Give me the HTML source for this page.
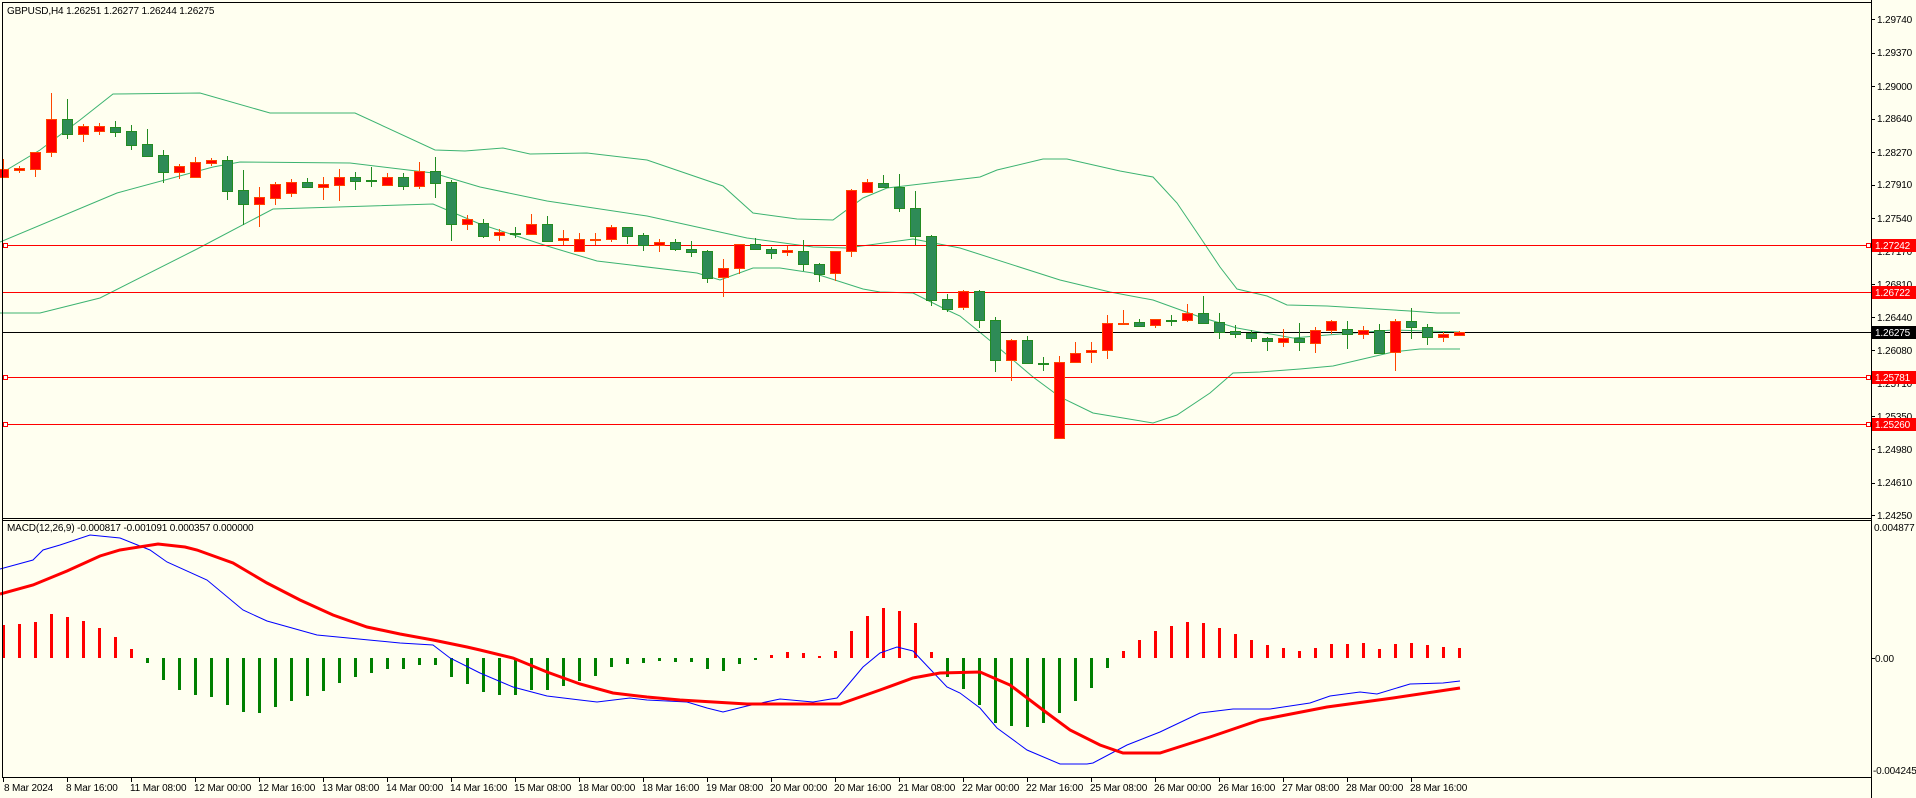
<!DOCTYPE html>
<html><head><meta charset="utf-8"><style>
html,body{margin:0;padding:0;background:#fffff0;}
svg{display:block;}
text{font-family:"Liberation Sans","DejaVu Sans",sans-serif;font-size:10px;letter-spacing:-0.15px;fill:#000;}
</style></head><body>
<svg id="s" width="1916" height="798" viewBox="0 0 1916 798" xmlns="http://www.w3.org/2000/svg" shape-rendering="crispEdges">
<rect x="0" y="0" width="1916" height="798" fill="#fffff0"/>
<g id="bands" fill="none" stroke="#3cb371" stroke-width="1" shape-rendering="auto">
<polyline points="0,174 40,150 80,120 113,94 200,93 270,113 355,113 435,150 465,151 503,148 530,154 587,153 647,160 723,186 753,213 797,219 833,220 863,198 887,188 980,177 997,170 1043,159 1067,159 1120,171 1153,177 1177,203 1200,237 1220,267 1237,289 1267,296 1287,305 1327,306 1410,311 1437,313 1460,313"/>
<polyline points="0,242 117,193 213,167 240,162 350,163 433,173 480,187 547,201 647,216 747,238 813,247 847,248 913,239 960,248 1060,280 1110,292 1153,300 1200,317 1237,328 1293,338 1327,335 1393,330 1460,332"/>
<polyline points="0,313 40,313 100,298 197,249 273,209 433,204 480,224 547,246 597,261 697,273 720,280 753,268 780,268 813,273 863,289 880,292 913,293 947,310 960,316 993,343 1033,377 1060,397 1093,413 1153,423 1177,415 1210,393 1233,373 1260,372 1300,369 1333,366 1393,352 1420,349 1460,349"/>
</g>
<g id="hl">
<line x1="2" y1="245.5" x2="1871" y2="245.5" stroke="#ff0000"/>
<line x1="2" y1="292.5" x2="1871" y2="292.5" stroke="#ff0000"/>
<line x1="2" y1="377.5" x2="1871" y2="377.5" stroke="#ff0000"/>
<line x1="2" y1="424.5" x2="1871" y2="424.5" stroke="#ff0000"/>
<line x1="2" y1="332.5" x2="1871" y2="332.5" stroke="#000"/>
<rect x="3.5" y="243.5" width="4" height="4" fill="#fff" stroke="#ff0000"/>
<rect x="3.5" y="375.5" width="4" height="4" fill="#fff" stroke="#ff0000"/>
<rect x="3.5" y="422.5" width="4" height="4" fill="#fff" stroke="#ff0000"/>
<rect x="1866.5" y="243.5" width="4" height="4" fill="#fff" stroke="#ff0000"/>
<rect x="1866.5" y="375.5" width="4" height="4" fill="#fff" stroke="#ff0000"/>
<rect x="1866.5" y="422.5" width="4" height="4" fill="#fff" stroke="#ff0000"/>
</g>
<g id="candles"></g>
<g id="hist"></g>
<g fill="none" shape-rendering="auto">
<polyline stroke="#0000ff" stroke-width="1" points="0,569 33,560 43,550 60,545 90,535 120,538 140,546 150,550 167,562 207,580 243,610 267,621 317,635 400,643 433,645 450,658 480,673 513,687 547,696 580,700 597,702 630,698 647,700 687,702 707,708 723,712 747,706 780,699 813,702 837,698 863,667 880,653 897,647 913,651 947,687 960,693 980,708 997,728 1027,750 1060,764 1087,764 1093,763 1127,745 1160,732 1200,713 1233,709 1270,709 1310,703 1330,696 1360,692 1377,694 1410,684 1443,683 1460,681"/>
<polyline stroke="#ff0000" stroke-width="3" points="0,594 33,585 67,571 100,556 120,550 158,544 185,547 197,550 233,563 267,583 300,600 333,615 367,627 400,634 433,640 467,647 480,650 513,658 547,672 580,684 613,693 647,697 680,700 747,704 840,704 880,690 913,678 940,673 980,672 1010,685 1043,710 1070,730 1100,745 1123,753 1160,753 1210,737 1260,720 1327,707 1393,698 1460,688"/>
</g>
<line x1="2.5" y1="2" x2="2.5" y2="778" stroke="#000"/>
<line x1="2" y1="2.5" x2="1871" y2="2.5" stroke="#000"/>
<line x1="1871.5" y1="0" x2="1871.5" y2="798" stroke="#000"/>
<line x1="2" y1="518.5" x2="1871" y2="518.5" stroke="#000"/>
<line x1="2" y1="520.5" x2="1871" y2="520.5" stroke="#000"/>
<line x1="2" y1="777.5" x2="1871" y2="777.5" stroke="#000"/>
<g id="pt" stroke="#000"></g>
<g id="tt" stroke="#000"></g>
<text x="7" y="14">GBPUSD,H4  1.26251 1.26277 1.26244 1.26275</text>
<text x="7" y="531">MACD(12,26,9) -0.000817 -0.001091 0.000357 0.000000</text>
<g id="plab">
<text x="1877" y="23">1.29740</text>
<text x="1877" y="56">1.29370</text>
<text x="1877" y="90">1.29000</text>
<text x="1877" y="122">1.28640</text>
<text x="1877" y="156">1.28270</text>
<text x="1877" y="188">1.27910</text>
<text x="1877" y="222">1.27540</text>
<text x="1877" y="255">1.27170</text>
<text x="1877" y="288">1.26810</text>
<text x="1877" y="321">1.26440</text>
<text x="1877" y="354">1.26080</text>
<text x="1877" y="387">1.25710</text>
<text x="1877" y="420">1.25350</text>
<text x="1877" y="453">1.24980</text>
<text x="1877" y="486">1.24610</text>
<text x="1877" y="519">1.24250</text>
</g>
<rect x="1872" y="239" width="44" height="13" fill="#ff0000"/><text x="1875" y="249" style="fill:#fff">1.27242</text>
<rect x="1872" y="286" width="44" height="13" fill="#ff0000"/><text x="1875" y="296" style="fill:#fff">1.26722</text>
<rect x="1872" y="326" width="44" height="13" fill="#000"/><text x="1875" y="336" style="fill:#fff">1.26275</text>
<rect x="1872" y="371" width="44" height="13" fill="#ff0000"/><text x="1875" y="381" style="fill:#fff">1.25781</text>
<rect x="1872" y="418" width="44" height="13" fill="#ff0000"/><text x="1875" y="428" style="fill:#fff">1.25260</text>
<text x="1874" y="531">0.004877</text>
<text x="1875" y="662">0.00</text>
<text x="1873" y="774">-0.004245</text>
<g id="tlab">
<text x="4" y="791">8 Mar 2024</text>
<text x="66" y="791">8 Mar 16:00</text>
<text x="130" y="791">11 Mar 08:00</text>
<text x="194" y="791">12 Mar 00:00</text>
<text x="258" y="791">12 Mar 16:00</text>
<text x="322" y="791">13 Mar 08:00</text>
<text x="386" y="791">14 Mar 00:00</text>
<text x="450" y="791">14 Mar 16:00</text>
<text x="514" y="791">15 Mar 08:00</text>
<text x="578" y="791">18 Mar 00:00</text>
<text x="642" y="791">18 Mar 16:00</text>
<text x="706" y="791">19 Mar 08:00</text>
<text x="770" y="791">20 Mar 00:00</text>
<text x="834" y="791">20 Mar 16:00</text>
<text x="898" y="791">21 Mar 08:00</text>
<text x="962" y="791">22 Mar 00:00</text>
<text x="1026" y="791">22 Mar 16:00</text>
<text x="1090" y="791">25 Mar 08:00</text>
<text x="1154" y="791">26 Mar 00:00</text>
<text x="1218" y="791">26 Mar 16:00</text>
<text x="1282" y="791">27 Mar 08:00</text>
<text x="1346" y="791">28 Mar 00:00</text>
<text x="1410" y="791">28 Mar 16:00</text>
</g>
</svg>
<script>
(function(){
var NS="http://www.w3.org/2000/svg";
function el(p,n,a){var e=document.createElementNS(NS,n);for(var k in a)e.setAttribute(k,a[k]);p.appendChild(e);return e;}
var C=[[169,177,159,177,'r'],[168,170,166,173,'r'],[152,169,152,177,'r'],[119,152,93,157,'r'],[119,134,99,139,'g'],[126,134,124,142,'r'],[126,131,123,135,'r'],[127,132,121,137,'g'],[131,145,125,150,'g'],[144,156,129,156,'g'],
[155,172,150,183,'g'],[166,172,164,179,'r'],[162,177,157,177,'r'],[160,163,158,166,'r'],[160,191,156,200,'g'],[190,204,170,225,'g'],[197,204,187,227,'r'],[184,198,182,205,'r'],[182,193,179,197,'r'],[182,187,178,187,'g'],
[184,187,177,200,'r'],[177,185,169,201,'r'],[177,181,172,190,'g'],[180,180,167,187,'g'],[177,185,173,185,'r'],[177,186,173,190,'g'],[171,186,162,189,'r'],[171,183,157,198,'g'],[182,224,180,241,'g'],[219,224,215,230,'r'],
[223,236,219,238,'g'],[232,235,229,241,'r'],[233,233,227,238,'g'],[224,234,214,235,'r'],[224,241,216,242,'g'],[238,240,230,245,'r'],[239,251,233,251,'r'],[239,239,233,245,'r'],[227,239,225,242,'r'],[227,236,227,244,'g'],
[235,245,233,251,'g'],[242,245,239,252,'r'],[242,249,239,251,'g'],[249,252,241,257,'g'],[251,278,250,283,'g'],[268,277,259,297,'r'],[244,268,244,274,'r'],[244,249,238,249,'g'],[249,253,247,259,'g'],[250,252,246,256,'r'],
[251,264,240,271,'g'],[264,274,263,282,'g'],[251,273,251,281,'r'],[190,251,189,257,'r'],[182,192,179,192,'r'],[183,187,175,187,'g'],[187,208,174,212,'g'],[208,236,191,245,'g'],[236,300,235,306,'g'],[299,309,294,312,'g'],
[291,307,290,310,'r'],[291,320,290,328,'g'],[320,360,317,372,'g'],[340,360,339,381,'r'],[340,363,336,363,'g'],[363,363,357,371,'g'],[362,438,356,438,'r'],[353,362,342,362,'r'],[350,352,342,363,'r'],[323,350,315,359,'r'],
[323,323,310,325,'r'],[322,326,319,327,'g'],[319,325,319,328,'r'],[320,320,315,326,'g'],[313,320,304,322,'r'],[313,323,296,324,'g'],[322,332,313,339,'g'],[331,334,325,338,'g'],[333,338,330,342,'g'],[338,341,337,351,'g'],
[338,342,329,347,'r'],[338,342,323,351,'g'],[330,343,327,353,'r'],[321,330,320,334,'r'],[329,334,321,349,'g'],[330,334,326,339,'r'],[330,353,324,354,'g'],[321,352,319,371,'r'],[321,327,308,339,'g'],[327,337,324,345,'g'],
[334,337,332,342,'r'],[332,335,331,336,'r']];
var g=document.getElementById('candles');
for(var i=0;i<C.length;i++){var c=C[i],cx=3+16*i;
 var sc=c[4]=='r'?'#ff4500':'#228b22', fc=c[4]=='r'?'#ff0000':'#2e8b57';
 el(g,'rect',{x:cx,y:c[2],width:1,height:Math.max(1,c[3]-c[2]),fill:sc});
 var h=c[1]-c[0];
 if(h<2){el(g,'rect',{x:cx-5,y:c[0],width:11,height:2,fill:sc});}
 else el(g,'rect',{x:cx-5+0.5,y:c[0]+0.5,width:10,height:h,fill:fc,stroke:sc});
}
var H=[625,624,622,614,617,621,628,637,649,663,680,690,695,697,705,712,713,707,701,696,691,683,677,673,669,669,665,665,677,684,692,695,695,690,690,686,681,676,667,664,663,661,662,662,669,671,664,659,655,652,653,656,651,631,616,608,611,623,652,677,689,705,723,726,727,723,713,701,688,668,651,640,631,626,622,623,628,634,640,645,648,651,648,644,644,643,649,644,643,645,647,648];
var hg=document.getElementById('hist');
for(var i=0;i<H.length;i++){var x=2+16*i,y=H[i];
 if(y<658) el(hg,'rect',{x:x,y:y,width:3,height:658-y,fill:'#ff0000'});
 else el(hg,'rect',{x:x,y:658,width:3,height:Math.max(2,y-658),fill:'#008000'});
}
var pt=document.getElementById('pt');
[19,53,86,119,152,185,218,251,284,317,350,383,416,449,483,515].forEach(function(y){el(pt,'line',{x1:1871,x2:1875,y1:y+0.5,y2:y+0.5});});
el(pt,'line',{x1:1871,x2:1875,y1:658.5,y2:658.5});
var tt=document.getElementById('tt');
for(var k=0;k<23;k++){var x=3+64*k+0.5;el(tt,'line',{x1:x,x2:x,y1:777,y2:782});}
})();
</script>
</body></html>
